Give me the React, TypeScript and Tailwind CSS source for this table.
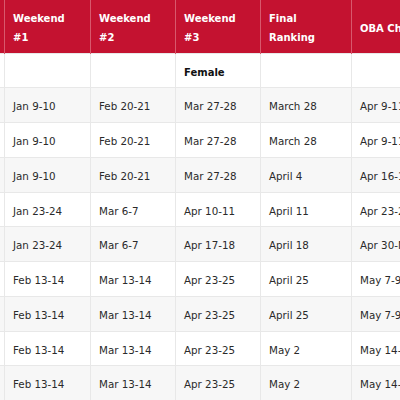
import React from "react";

const rows: string[][] = [
  ["", "", "", "Female", "", ""],
  ["", "Jan 9-10", "Feb 20-21", "Mar 27-28", "March 28", "Apr 9-11"],
  ["", "Jan 9-10", "Feb 20-21", "Mar 27-28", "March 28", "Apr 9-11"],
  ["", "Jan 9-10", "Feb 20-21", "Mar 27-28", "April 4", "Apr 16-18"],
  ["", "Jan 23-24", "Mar 6-7", "Apr 10-11", "April 11", "Apr 23-25"],
  ["", "Jan 23-24", "Mar 6-7", "Apr 17-18", "April 18", "Apr 30-May 2"],
  ["", "Feb 13-14", "Mar 13-14", "Apr 23-25", "April 25", "May 7-9"],
  ["", "Feb 13-14", "Mar 13-14", "Apr 23-25", "April 25", "May 7-9"],
  ["", "Feb 13-14", "Mar 13-14", "Apr 23-25", "May 2", "May 14-16"],
  ["", "Feb 13-14", "Mar 13-14", "Apr 23-25", "May 2", "May 14-16"],
];

const headers = [
  ["Age", "Group"],
  ["Weekend", "#1"],
  ["Weekend", "#2"],
  ["Weekend", "#3"],
  ["Final", "Ranking"],
  ["OBA Championships"],
];

export default function App() {
  return (
    <div
      className="w-[400px] h-[400px] overflow-hidden bg-white text-[#2a2a2a]"
      style={{ fontFamily: '"DejaVu Sans", Verdana, sans-serif' }}
    >
      <table className="border-collapse table-fixed ml-[-96px] w-[640px] text-[10.3px]">
        <colgroup>
          <col className="w-[100px]" />
          <col className="w-[86px]" />
          <col className="w-[85px]" />
          <col className="w-[85px]" />
          <col className="w-[91px]" />
          <col className="w-[193px]" />
        </colgroup>
        <thead>
          <tr className="bg-[#c41230] h-[53px]">
            {headers.map((h, i) => (
              <th
                key={i}
                className="border-x border-[#d8586c] px-2 pt-[4px] text-left align-middle font-bold text-white text-[10px] leading-[19px] whitespace-nowrap"
              >
                {h.map((l, j) => (
                  <div key={j}>{l}</div>
                ))}
              </th>
            ))}
          </tr>
        </thead>
        <tbody>
          {rows.map((r, i) => (
            <tr
              key={i}
              className={`h-[34.75px] ${i % 2 === 1 ? "bg-[#f7f7f7]" : "bg-white"}`}
            >
              {r.map((c, j) => (
                <td
                  key={j}
                  className={`border border-[#e8e8e8] px-2 pt-[4px] pb-0 align-middle whitespace-nowrap ${
                    i === 0 ? "font-bold text-[10px] text-[#111]" : ""
                  }`}
                >
                  {c}
                </td>
              ))}
            </tr>
          ))}
        </tbody>
      </table>
    </div>
  );
}
